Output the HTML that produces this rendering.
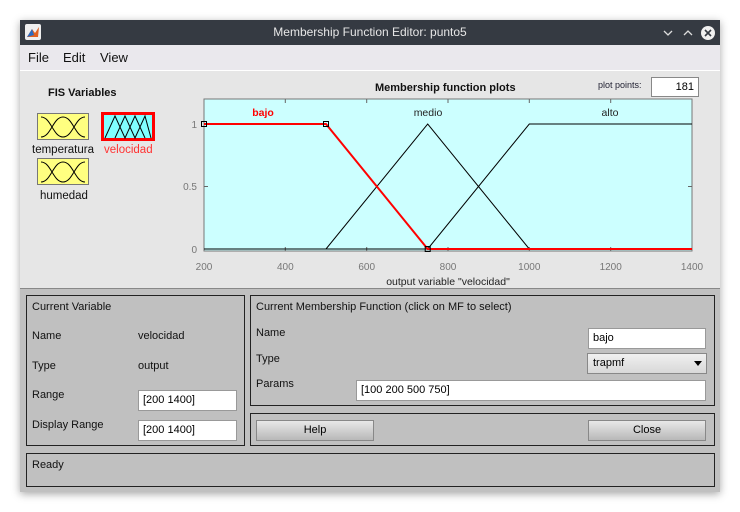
<!DOCTYPE html>
<html><head><meta charset="utf-8"><style>
*{margin:0;padding:0;box-sizing:border-box}
body{width:740px;height:512px;background:#fff;font-family:"Liberation Sans","DejaVu Sans",sans-serif;position:relative;overflow:hidden}
.a{position:absolute}
.win{left:20px;top:20px;width:700px;height:472px;background:#e6e6e6;box-shadow:0 2px 8px rgba(0,0,0,.35)}
.title{left:20px;top:20px;width:700px;height:25px;background:#353a42;color:#e6e6e6;font-size:12px;text-align:center;line-height:25px}
.menu{left:20px;top:45px;width:700px;height:26px;background:#eae8ed;border-bottom:1px solid #fff;font-size:13px;color:#111}
.lower{left:20px;top:288px;width:700px;height:204px;background:#c0c0c0;border-top:1px solid #888}
.box{border:1px solid #222;background:#c0c0c0}
.t{font-size:11px;color:#111;white-space:nowrap}
.in{background:#fff;border:1px solid #999;font-size:11px;padding-left:4px;line-height:18px;color:#000}
.btn{background:linear-gradient(#e8e8e8,#b8b8b8);border:1px solid #888;font-size:11px;text-align:center;line-height:18px}
</style></head><body>
<div class="a win"></div>
<div class="a title">Membership Function Editor: punto5</div>
<div class="a" style="left:25px;top:24px;width:16px;height:16px;background:#eee;border-radius:2px"><svg width="16" height="16"><path d="M2 13 L7 5 L10 9 L14 3 L13 13Z" fill="#e06020"/><path d="M2 13 L7 5 L9 11Z" fill="#2a6ac0"/></svg></div>
<svg class="a" style="left:660px;top:24px" width="60" height="18"><path d="M4 7 L8 11 L12 7" stroke="#ddd" stroke-width="1.3" fill="none"/><path d="M24 11 L28 7 L32 11" stroke="#ddd" stroke-width="1.3" fill="none"/><circle cx="48" cy="9" r="7" fill="#f0f0f0"/><path d="M45 6 L51 12 M51 6 L45 12" stroke="#353a42" stroke-width="1.6"/></svg>
<div class="a menu"><span class="a" style="left:8px;top:5px">File</span><span class="a" style="left:43px;top:5px">Edit</span><span class="a" style="left:80px;top:5px">View</span></div>

<div class="a t" style="left:48px;top:87px;font-weight:bold">FIS Variables</div>
<svg class="a" style="left:37px;top:113px" width="52" height="27"><rect x=".5" y=".5" width="51" height="26" fill="#ffff80" stroke="#777"/><path d="M4 24 C14 24 16 4 26 4 C36 4 38 24 48 24 M4 4 C14 4 16 24 26 24 C36 24 38 4 48 4" stroke="#000" fill="none"/></svg>
<svg class="a" style="left:101px;top:112px" width="54" height="29"><rect x="1.5" y="1.5" width="51" height="26" fill="#80ffff" stroke="#f00" stroke-width="3"/><path d="M4 26 L14 4 L24 26 L34 4 L44 26 M14 26 L24 4 L34 26 L44 4 L50 26" stroke="#000" fill="none"/></svg>
<div class="a t" style="left:32px;top:144px;font-size:11.5px">temperatura</div>
<div class="a t" style="left:104px;top:144px;font-size:11.5px;color:#f33">velocidad</div>
<svg class="a" style="left:37px;top:158px" width="52" height="27"><rect x=".5" y=".5" width="51" height="26" fill="#ffff80" stroke="#777"/><path d="M4 24 C14 24 16 4 26 4 C36 4 38 24 48 24 M4 4 C14 4 16 24 26 24 C36 24 38 4 48 4" stroke="#000" fill="none"/></svg>
<div class="a t" style="left:40px;top:190px;font-size:11.5px">humedad</div>

<div class="a t" style="left:375px;top:82px;font-weight:bold">Membership function plots</div>
<div class="a t" style="left:598px;top:80px;font-size:9px;color:#223">plot points:</div>
<div class="a in" style="left:651px;top:77px;width:48px;height:20px;text-align:right;padding-right:4px;border-color:#888">181</div>

<svg class="a" style="left:180px;top:90px" width="540" height="200" font-family="Liberation Sans, sans-serif">
<rect x="24" y="9" width="488" height="152" fill="#ccffff" stroke="#777"/>
<g stroke="#666"><path d="M105.3 9v4M186.7 9v4M268 9v4M349.3 9v4M430.7 9v4M105.3 161v-4M186.7 161v-4M268 161v-4M349.3 161v-4M430.7 161v-4M24 96.5h4M512 96.5h-4M512 34h-4M512 159h-4"/></g>
<g font-size="10" fill="#777" text-anchor="middle"><text x="24" y="180">200</text><text x="105.3" y="180">400</text><text x="186.7" y="180">600</text><text x="268" y="180">800</text><text x="349.3" y="180">1000</text><text x="430.7" y="180">1200</text><text x="512" y="180">1400</text>
<text x="17" y="38" text-anchor="end">1</text><text x="17" y="100" text-anchor="end">0.5</text><text x="17" y="163" text-anchor="end">0</text></g>
<text x="268" y="195" font-size="10.5" fill="#222" text-anchor="middle">output variable "velocidad"</text>
<g fill="none" stroke="#000" stroke-width="1"><path d="M24 159H146L247.7 34L349.3 159H512"/><path d="M24 159H247.7L349.3 34H512"/></g>
<path d="M24 34H146L247.7 159H512" fill="none" stroke="#f00" stroke-width="2"/>
<g fill="none" stroke="#000"><rect x="21.5" y="31.5" width="5" height="5"/><rect x="143.5" y="31.5" width="5" height="5"/><rect x="245.2" y="156.5" width="5" height="5"/></g>
<g font-size="10.5" text-anchor="middle"><text x="83" y="26" fill="#f00" font-weight="bold">bajo</text><text x="248" y="26" fill="#222">medio</text><text x="430" y="26" fill="#222">alto</text></g>
</svg>

<div class="a lower"></div>
<div class="a box" style="left:26px;top:295px;width:219px;height:151px"></div>
<div class="a box" style="left:250px;top:295px;width:465px;height:111px"></div>
<div class="a box" style="left:250px;top:413px;width:465px;height:33px"></div>
<div class="a box" style="left:26px;top:453px;width:689px;height:34px"></div>

<div class="a t" style="left:32px;top:301px">Current Variable</div>
<div class="a t" style="left:32px;top:330px">Name</div><div class="a t" style="left:138px;top:330px">velocidad</div>
<div class="a t" style="left:32px;top:360px">Type</div><div class="a t" style="left:138px;top:360px">output</div>
<div class="a t" style="left:32px;top:389px">Range</div>
<div class="a t" style="left:32px;top:419px">Display Range</div>
<div class="a in" style="left:138px;top:390px;width:99px;height:21px">[200 1400]</div>
<div class="a in" style="left:138px;top:420px;width:99px;height:21px">[200 1400]</div>

<div class="a t" style="left:256px;top:301px">Current Membership Function (click on MF to select)</div>
<div class="a t" style="left:256px;top:327px">Name</div>
<div class="a t" style="left:256px;top:353px">Type</div>
<div class="a t" style="left:256px;top:378px">Params</div>
<div class="a in" style="left:588px;top:328px;width:118px;height:21px">bajo</div>
<div class="a btn" style="left:587px;top:353px;width:120px;height:21px;text-align:left;padding-left:5px;background:linear-gradient(#f0f0f0,#d8d8d8)">trapmf<span class="a" style="right:4px;top:7px;border:4px solid transparent;border-top:5px solid #000"></span></div>
<div class="a in" style="left:356px;top:380px;width:350px;height:21px">[100 200 500 750]</div>
<div class="a btn" style="left:256px;top:420px;width:118px;height:21px">Help</div>
<div class="a btn" style="left:588px;top:420px;width:118px;height:21px">Close</div>
<div class="a t" style="left:32px;top:459px">Ready</div>
</body></html>
